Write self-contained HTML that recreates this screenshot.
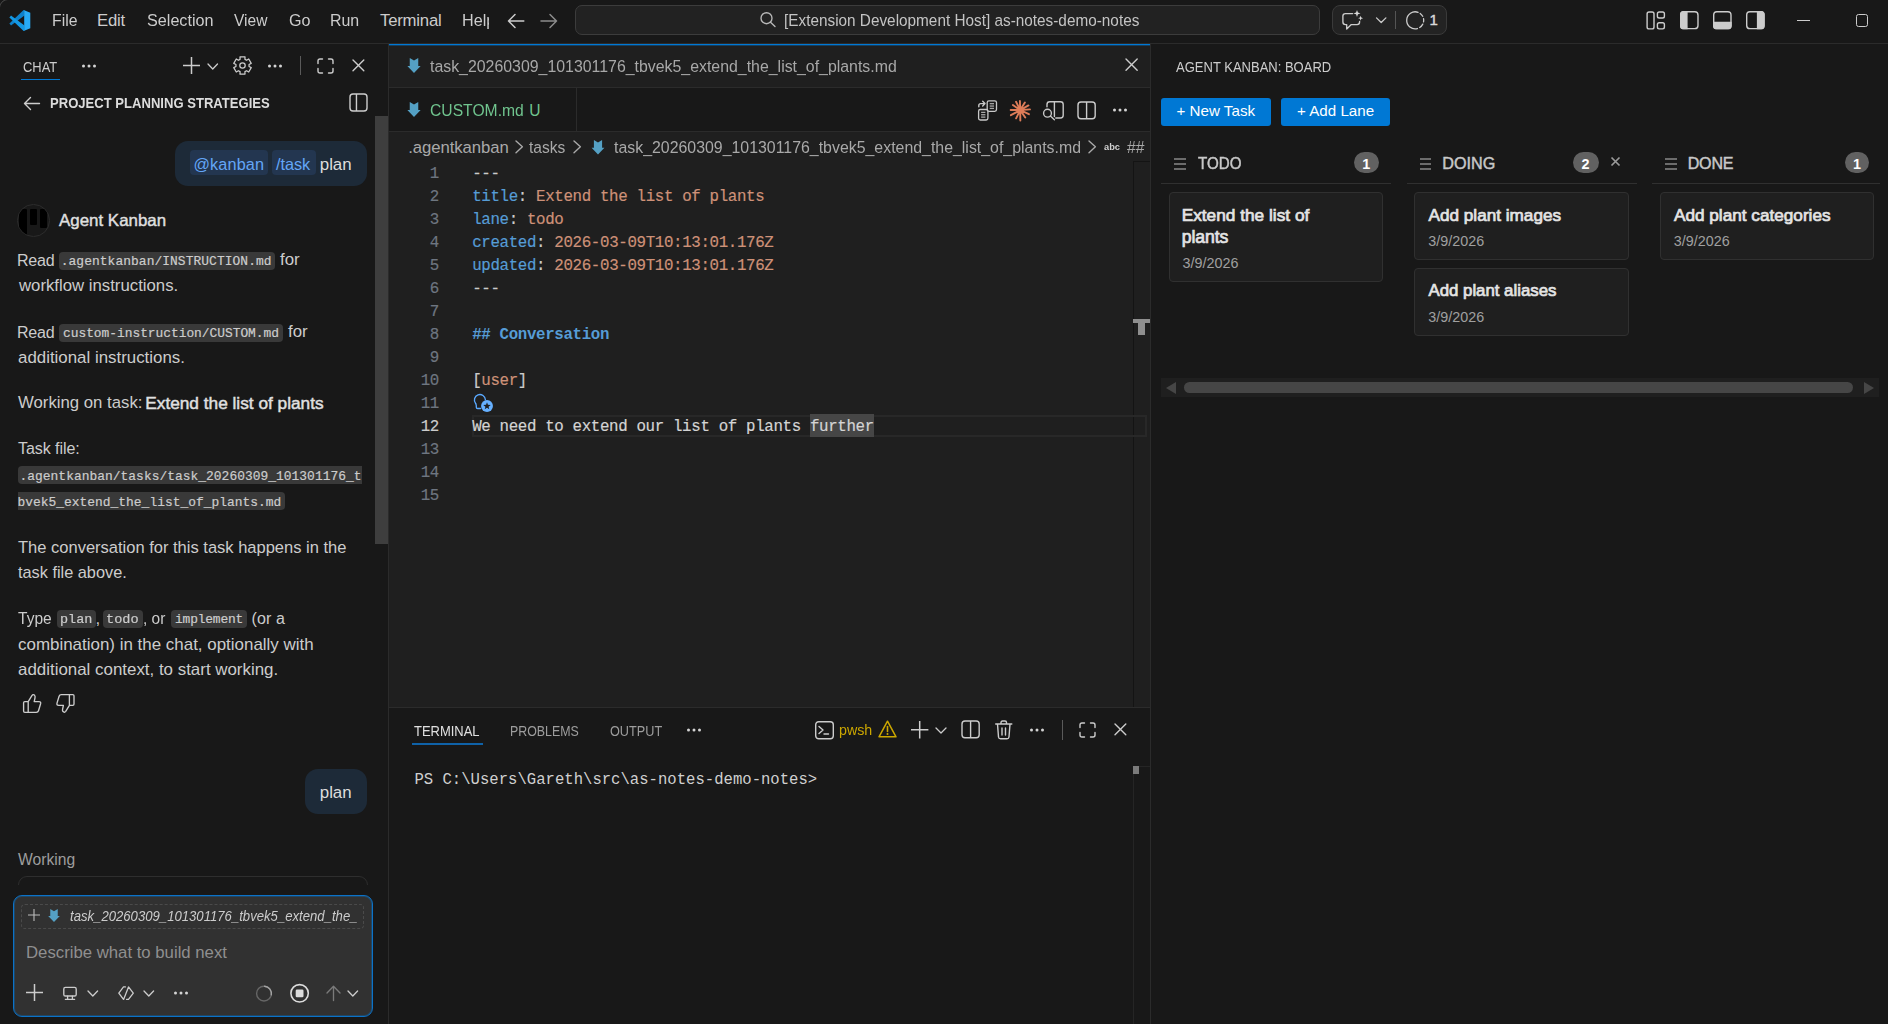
<!DOCTYPE html>
<html lang="en"><head><meta charset="utf-8"><title>[Extension Development Host] as-notes-demo-notes</title>
<style>
html,body{margin:0;padding:0;}
body{width:1888px;height:1024px;overflow:hidden;background:#181818;position:relative;font-family:"Liberation Sans",sans-serif;}
.a{position:absolute;box-sizing:border-box;}
.t{position:absolute;white-space:pre;margin:0;padding:0;line-height:20px;transform-origin:0 50%;font-family:"Liberation Sans",sans-serif;}
.m{font-family:"Liberation Mono",monospace;-webkit-text-stroke:0.2px currentColor;}
.ln{line-height:23px;height:23px;white-space:pre;font-family:"Liberation Mono",monospace;-webkit-text-stroke:0.18px currentColor;}
svg{position:absolute;overflow:visible;}
.s{fill:none;stroke:#cccccc;stroke-width:1;stroke-linecap:round;stroke-linejoin:round;}
</style></head><body>
<div class="a" style="left:0px;top:43px;width:1888px;height:1px;background:#2b2b2b;"></div>
<div class="a" style="left:388px;top:44px;width:1px;height:980px;background:#2b2b2b;"></div>
<div class="a" style="left:389px;top:44px;width:761px;height:663px;background:#1f1f1f;"></div>
<div class="a" style="left:389px;top:44px;width:761px;height:1px;background:#0078d4;"></div>
<div class="a" style="left:389px;top:45px;width:761px;height:1px;background:rgba(0,120,212,0.35);"></div>
<div class="a" style="left:389px;top:87px;width:761px;height:1px;background:#2b2b2b;"></div>
<div class="a" style="left:389px;top:88px;width:761px;height:43px;background:#181818;"></div>
<div class="a" style="left:576px;top:88px;width:1px;height:43px;background:#2b2b2b;"></div>
<div class="a" style="left:389px;top:131px;width:761px;height:1px;background:#2b2b2b;"></div>
<div class="a" style="left:389px;top:707px;width:761px;height:1px;background:#2b2b2b;"></div>
<div class="a" style="left:1150px;top:44px;width:1px;height:980px;background:#2b2b2b;"></div>
<svg style="left:8px;top:9px" width="24" height="23" viewBox="8 9 24 23"><path d="M11 25.600L24.500 15.400V10.400L23.600 10L9.400 23.500Z" fill="#0e82cc"/><path d="M11 15.400L24.500 25.600V30.600L23.600 31L9.400 17.500Z" fill="#1398e4"/><path d="M23.600 10L30.300 12.700V28.300L23.600 31L24.200 30.200V10.800Z" fill="#28abf6"/></svg>
<span class="t" style="left:51.80px;top:11.30px;font-size:16.73px;color:#cccccc;transform:scaleX(0.9457);">File</span>
<span class="t" style="left:97.00px;top:11.30px;font-size:16.73px;color:#cccccc;letter-spacing:-0.221px;">Edit</span>
<span class="t" style="left:146.50px;top:11.30px;font-size:16.73px;color:#cccccc;transform:scaleX(0.9675);">Selection</span>
<span class="t" style="left:233.75px;top:11.30px;font-size:16.73px;color:#cccccc;transform:scaleX(0.9292);">View</span>
<span class="t" style="left:288.75px;top:11.30px;font-size:16.73px;color:#cccccc;transform:scaleX(0.9657);">Go</span>
<span class="t" style="left:330.05px;top:11.30px;font-size:16.73px;color:#cccccc;transform:scaleX(0.9533);">Run</span>
<span class="t" style="left:380.00px;top:11.30px;font-size:16.73px;color:#cccccc;letter-spacing:-0.209px;">Terminal</span>
<div class="a" style="left:460px;top:8px;width:28.6px;height:28px;overflow:hidden">
<span class="t" style="left:1.53px;top:2.80px;font-size:16.73px;color:#cccccc;transform:scaleX(0.9672);">Help</span>
</div>
<svg style="left:507.5px;top:13.899999999999999px" width="15.799999999999955" height="14" viewBox="0 0 15.799999999999955 14"><path d="M15.799999999999955 7H0.5M7 0.5L0.5 7L7 13.5" style="fill:none;stroke:#cccccc;stroke-width:1.5;stroke-linecap:round;stroke-linejoin:round"/></svg>
<svg style="left:541px;top:13.899999999999999px" width="16" height="14" viewBox="0 0 16 14"><path d="M0 7H15.5M9 0.5L15.5 7L9 13.5" style="fill:none;stroke:#8c8c8c;stroke-width:1.5;stroke-linecap:round;stroke-linejoin:round"/></svg>
<div class="a" style="left:575px;top:5px;width:745px;height:30px;background:#222222;border:1px solid #3c3c3c;border-radius:7px;"></div>
<svg style="left:758px;top:10px" width="20" height="20" viewBox="758 10 20 20"><circle cx="766.500" cy="18.200" r="5.500" style="fill:none;stroke:#b8b8b8;stroke-width:1.35;stroke-linecap:round;stroke-linejoin:round;"/><path d="M770.500 22.200L775 26.600" style="fill:none;stroke:#b8b8b8;stroke-width:1.35;stroke-linecap:round;stroke-linejoin:round;"/></svg>
<span class="t" style="left:783.84px;top:10.60px;font-size:15.94px;color:#c4c4c4;transform:scaleX(0.9619);">[Extension Development Host] as-notes-demo-notes</span>
<div class="a" style="left:1332px;top:5px;width:115.3px;height:30px;background:#232323;border:1px solid #3a3a3a;border-radius:8px;"></div>
<svg style="left:1340px;top:9px" width="25" height="23" viewBox="1340 9 25 23"><path d="M1352.600 13.600H1345.400Q1342.900 13.600 1342.900 16.100V22.100Q1342.900 24.600 1345.400 24.600H1346.700V29L1351.300 24.600H1357.100Q1359.600 24.600 1359.600 22.100V21.400" style="fill:none;stroke:#cccccc;stroke-width:1.35;stroke-linecap:round;stroke-linejoin:round;"/><path d="M1357.00 9.90L1357.94 12.46L1360.50 13.40L1357.94 14.34L1357.00 16.90L1356.06 14.34L1353.50 13.40L1356.06 12.46Z" fill="#d8d8d8"/><path d="M1360.60 15.70L1361.27 17.53L1363.10 18.20L1361.27 18.87L1360.60 20.70L1359.93 18.87L1358.10 18.20L1359.93 17.53Z" fill="#d8d8d8"/></svg>
<svg style="left:1374px;top:15px" width="15" height="11" viewBox="1374 15 15 11"><path d="M1376.500 17.900L1381.200 22.500L1385.900 17.900" style="fill:none;stroke:#cccccc;stroke-width:1.3;stroke-linecap:round;stroke-linejoin:round;"/></svg>
<div class="a" style="left:1395px;top:11px;width:1px;height:17.6px;background:#555555;"></div>
<svg style="left:1404px;top:9px" width="23" height="23" viewBox="1404 9 23 23"><path d="M1417.40 28.51A8.5 8.5 0 1 1 1418.11 12.31" style="fill:none;stroke:#cccccc;stroke-width:1.3;stroke-linecap:round;stroke-linejoin:round;"/><path d="M1420.20 13.42A8.5 8.5 0 0 1 1422.71 16.31" style="fill:none;stroke:#cccccc;stroke-width:1.3;stroke-linecap:round;stroke-linejoin:round;"/><path d="M1423.54 18.68A8.5 8.5 0 0 1 1423.54 21.92" style="fill:none;stroke:#cccccc;stroke-width:1.3;stroke-linecap:round;stroke-linejoin:round;"/><path d="M1422.77 24.16A8.5 8.5 0 0 1 1419.70 27.51" style="fill:none;stroke:#cccccc;stroke-width:1.3;stroke-linecap:round;stroke-linejoin:round;"/></svg>
<span class="t" style="left:1429.60px;top:10.30px;font-size:15.0px;color:#d8d8d8;-webkit-text-stroke:0.45px currentColor;">1</span>
<svg style="left:1645px;top:10px" width="22" height="21" viewBox="1645 10 22 21"><rect x="1647.100" y="12" width="6.900" height="16.900" rx="1.900" style="fill:none;stroke:#cccccc;stroke-width:1.4;stroke-linecap:round;stroke-linejoin:round;"/><rect x="1657.400" y="12" width="7" height="6" rx="1.800" style="fill:none;stroke:#cccccc;stroke-width:1.4;stroke-linecap:round;stroke-linejoin:round;"/><rect x="1657.400" y="22.700" width="7" height="6.200" rx="1.800" style="fill:none;stroke:#cccccc;stroke-width:1.4;stroke-linecap:round;stroke-linejoin:round;"/></svg>
<svg style="left:1678.8px;top:10.3px" width="20.700000000000045" height="20.3" viewBox="1678.8 10.3 20.700000000000045 20.3"><path d="M1683.3999999999999 11.3H1687.4V29.6H1683.3999999999999Q1679.8 29.6 1679.8 26.0V14.9Q1679.8 11.3 1683.3999999999999 11.3Z" fill="#cccccc"/><rect x="1680.5" y="12.0" width="17.3" height="16.900000000000002" rx="3.200" style="fill:none;stroke:#cccccc;stroke-width:1.4;stroke-linecap:round;stroke-linejoin:round;"/></svg>
<svg style="left:1711.8px;top:10.3px" width="20.700000000000045" height="20.3" viewBox="1711.8 10.3 20.700000000000045 20.3"><path d="M1712.8 22H1731.5V26.0Q1731.5 29.6 1727.9 29.6H1716.3999999999999Q1712.8 29.6 1712.8 26.0Z" fill="#cccccc"/><rect x="1713.5" y="12.0" width="17.3" height="16.900000000000002" rx="3.200" style="fill:none;stroke:#cccccc;stroke-width:1.4;stroke-linecap:round;stroke-linejoin:round;"/></svg>
<svg style="left:1744.9px;top:10.3px" width="20.700000000000045" height="20.3" viewBox="1744.9 10.3 20.700000000000045 20.3"><path d="M1761.0000000000002 11.3H1756.8V29.6H1761.0000000000002Q1764.6000000000001 29.6 1764.6000000000001 26.0V14.9Q1764.6000000000001 11.3 1761.0000000000002 11.3Z" fill="#cccccc"/><rect x="1746.6000000000001" y="12.0" width="17.3" height="16.900000000000002" rx="3.200" style="fill:none;stroke:#cccccc;stroke-width:1.4;stroke-linecap:round;stroke-linejoin:round;"/></svg>
<div class="a" style="left:1797px;top:19.7px;width:12.8px;height:1.4px;background:#cccccc;"></div>
<div class="a" style="left:1855.6px;top:14.4px;width:12.7px;height:13px;border:1.4px solid #cccccc;border-radius:2.5px;"></div>
<div class="a" style="left:-1px;top:-1px;width:14px;height:14px;border-top-left-radius:9px;border-top:1px solid #4a4a4a;border-left:1px solid #4a4a4a;-webkit-mask-image:linear-gradient(135deg,#000 30%,transparent 55%)"></div>
<span class="t" style="left:23.00px;top:56.80px;font-size:14.55px;color:#cccccc;transform:scaleX(0.8878);">CHAT</span>
<div class="a" style="left:20.5px;top:79px;width:39px;height:1.3px;background:#0078d4;"></div>
<svg style="left:81px;top:64px" width="16" height="4" viewBox="0 0 16 4"><circle cx="2.5" cy="2" r="1.5" fill="#d4d4d4"/><circle cx="8.0" cy="2" r="1.5" fill="#d4d4d4"/><circle cx="13.5" cy="2" r="1.5" fill="#d4d4d4"/></svg>
<svg style="left:183.0px;top:57.0px" width="17.0" height="17.0" viewBox="0 0 17.0 17.0"><path d="M0 8.5H17.0M8.5 0V17.0" style="fill:none;stroke:#cccccc;stroke-width:1.5"/></svg>
<svg style="left:207.75px;top:63.5px" width="9.5" height="5" viewBox="0 0 9.5 5"><path d="M0 0L4.75 5L9.5 0" style="fill:none;stroke:#cccccc;stroke-width:1.3;stroke-linecap:round;stroke-linejoin:round"/></svg>
<svg style="left:231.7px;top:55.3px" width="21.0" height="21.0" viewBox="231.7 55.3 21.0 21.0"><path d="M239.77 59.66L239.69 57.16L244.71 57.16L244.63 59.66L246.30 60.63L248.43 59.30L250.94 63.65L248.73 64.84L248.73 66.76L250.94 67.95L248.43 72.30L246.30 70.97L244.63 71.94L244.71 74.44L239.69 74.44L239.77 71.94L238.10 70.97L235.97 72.30L233.46 67.95L235.67 66.76L235.67 64.84L233.46 63.65L235.97 59.30L238.10 60.63Z" style="fill:none;stroke:#cccccc;stroke-width:1.25;stroke-linecap:round;stroke-linejoin:round;"/><circle cx="242.2" cy="65.8" r="2.7" style="fill:none;stroke:#cccccc;stroke-width:1.25;stroke-linecap:round;stroke-linejoin:round;"/></svg>
<svg style="left:267px;top:64px" width="16" height="4" viewBox="0 0 16 4"><circle cx="2.5" cy="2" r="1.5" fill="#d4d4d4"/><circle cx="8.0" cy="2" r="1.5" fill="#d4d4d4"/><circle cx="13.5" cy="2" r="1.5" fill="#d4d4d4"/></svg>
<div class="a" style="left:300px;top:56px;width:1px;height:19px;background:#5a5a5a;"></div>
<svg style="left:317.6px;top:58.7px" width="15" height="14" viewBox="0 0 15 14"><path d="M0 4.5V2Q0 0 2 0H4.5M10.5 0H13Q15 0 15 2V4.5M15 9.5V12Q15 14 13 14H10.5M4.5 14H2Q0 14 0 12V9.5" style="fill:none;stroke:#cccccc;stroke-width:1.4;stroke-linecap:round"/></svg>
<svg style="left:353.1px;top:60.300000000000004px" width="10.8" height="10.8" viewBox="0 0 10.8 10.8"><path d="M0 0L10.8 10.8M10.8 0L0 10.8" style="fill:none;stroke:#cccccc;stroke-width:1.4;stroke-linecap:round"/></svg>
<svg style="left:24px;top:96.5px" width="15.5" height="13.0" viewBox="0 0 15.5 13.0"><path d="M15.5 6.5H0.5M6.5 0.5L0.5 6.5L6.5 12.5" style="fill:none;stroke:#cccccc;stroke-width:1.4;stroke-linecap:round;stroke-linejoin:round"/></svg>
<span class="t" style="left:50.00px;top:93.00px;font-size:14.55px;color:#dcdcdc;font-weight:700;transform:scaleX(0.8982);">PROJECT PLANNING STRATEGIES</span>
<svg style="left:349.5px;top:93.8px" width="17" height="17" viewBox="0 0 17 17"><rect x="0" y="0" width="17" height="17" rx="3" style="fill:none;stroke:#cccccc;stroke-width:1.4"/><path d="M6.46 0V17" style="stroke:#cccccc;stroke-width:1.4"/></svg>
<div class="a" style="left:375px;top:116px;width:13px;height:428px;background:#3e3e3e;"></div>
<div class="a" style="left:175px;top:141px;width:192px;height:44.5px;background:#1d2a38;border-radius:13px;"></div>
<div class="a" style="left:190px;top:150px;width:77.5px;height:24.5px;background:#233650;border-radius:4px;"></div>
<div class="a" style="left:272px;top:150px;width:43.5px;height:24.5px;background:#233650;border-radius:4px;"></div>
<span class="t" style="left:193.50px;top:154.00px;font-size:16.26px;color:#63a6f7;letter-spacing:0.122px;">@kanban</span>
<span class="t" style="left:276.00px;top:154.00px;font-size:16.31px;color:#63a6f7;letter-spacing:-0.067px;">/task</span>
<span class="t" style="left:319.75px;top:154.50px;font-size:16.86px;color:#dddddd;">plan</span>
<div class="a" style="left:17px;top:204.3px;width:32.6px;height:32.6px;border-radius:50%;overflow:hidden;border:1px solid #2c2c2c"><div class="a" style="left:1.1px;top:3.7px;width:7.5px;height:26px;background:#000;border-radius:1px"></div><div class="a" style="left:11.5px;top:3.7px;width:7.7px;height:15.6px;background:#000;border-radius:1px"></div><div class="a" style="left:21.5px;top:3.7px;width:7.5px;height:19.3px;background:#000;border-radius:1px"></div></div>
<span class="t" style="left:59.00px;top:210.80px;font-size:16.91px;color:#dfdfdf;letter-spacing:-0.001px;-webkit-text-stroke:0.45px currentColor;">Agent Kanban</span>
<span class="t" style="left:17.00px;top:249.50px;font-size:16.05px;color:#cccccc;letter-spacing:-0.220px;">Read</span>
<div class="a" style="left:59px;top:251.5px;width:216px;height:18.5px;background:#393939;border-radius:4px;"></div>
<span class="t m" style="left:60.75px;top:251.80px;font-size:12.9px;color:#cccccc;letter-spacing:0.072px;">.agentkanban/INSTRUCTION.md</span>
<span class="t" style="left:280.00px;top:250.00px;font-size:16.83px;color:#cccccc;letter-spacing:-0.017px;">for</span>
<span class="t" style="left:19.00px;top:276.00px;font-size:16.76px;color:#cccccc;">workflow instructions.</span>
<span class="t" style="left:17.00px;top:321.50px;font-size:16.05px;color:#cccccc;letter-spacing:-0.220px;">Read</span>
<div class="a" style="left:59px;top:323.5px;width:223.5px;height:18.5px;background:#393939;border-radius:4px;"></div>
<span class="t m" style="left:63.00px;top:323.80px;font-size:12.9px;color:#cccccc;letter-spacing:-0.023px;">custom-instruction/CUSTOM.md</span>
<span class="t" style="left:288.00px;top:322.00px;font-size:16.83px;color:#cccccc;letter-spacing:-0.017px;">for</span>
<span class="t" style="left:18.00px;top:348.00px;font-size:16.88px;color:#cccccc;letter-spacing:0.005px;">additional instructions.</span>
<span class="t" style="left:18.00px;top:393.20px;font-size:16.76px;color:#cccccc;letter-spacing:-0.002px;">Working on task:</span>
<span class="t" style="left:145.25px;top:392.70px;font-size:17.25px;color:#e0e0e0;-webkit-text-stroke:0.45px currentColor;">Extend the list of plants</span>
<span class="t" style="left:18.00px;top:437.70px;font-size:16.05px;color:#cccccc;letter-spacing:-0.073px;">Task file:</span>
<div class="a" style="left:18px;top:466px;width:343.5px;height:18px;background:#393939;border-radius:4px 0 0 4px;"></div>
<span class="t m" style="left:19.50px;top:466.50px;font-size:12.9px;color:#cccccc;letter-spacing:0.038px;">.agentkanban/tasks/task_20260309_101301176_t</span>
<div class="a" style="left:18px;top:492px;width:266.5px;height:18.4px;background:#393939;border-radius:0 4px 4px 0;"></div>
<span class="t m" style="left:17.50px;top:493.00px;font-size:12.9px;color:#cccccc;letter-spacing:0.022px;">bvek5_extend_the_list_of_plants.md</span>
<span class="t" style="left:18.00px;top:537.70px;font-size:16.52px;color:#cccccc;letter-spacing:-0.005px;">The conversation for this task happens in the</span>
<span class="t" style="left:18.00px;top:562.00px;font-size:16.34px;color:#cccccc;letter-spacing:-0.009px;">task file above.</span>
<span class="t" style="left:18.00px;top:608.30px;font-size:16.05px;color:#cccccc;transform:scaleX(0.9687);">Type</span>
<div class="a" style="left:57px;top:609.6px;width:38.5px;height:18.199999999999932px;background:#393939;border-radius:4px;"></div>
<span class="t m" style="left:59.71px;top:610.00px;font-size:12.9px;color:#cccccc;transform:scaleX(1.0443);">plan</span>
<span class="t" style="left:95.50px;top:608.80px;font-size:16.9px;color:#cccccc;">,</span>
<div class="a" style="left:103.25px;top:609.6px;width:39.25px;height:18.199999999999932px;background:#393939;border-radius:4px;"></div>
<span class="t m" style="left:106.45px;top:610.00px;font-size:12.9px;color:#cccccc;transform:scaleX(1.0528);">todo</span>
<span class="t" style="left:142.54px;top:608.30px;font-size:16.05px;color:#cccccc;transform:scaleX(0.9639);">, or</span>
<div class="a" style="left:170.5px;top:609.6px;width:76.5px;height:18.199999999999932px;background:#393939;border-radius:4px;"></div>
<span class="t m" style="left:175.00px;top:610.00px;font-size:12.9px;color:#cccccc;letter-spacing:-0.173px;">implement</span>
<span class="t" style="left:251.50px;top:608.30px;font-size:16.05px;color:#cccccc;letter-spacing:0.113px;">(or a</span>
<span class="t" style="left:18.00px;top:634.50px;font-size:16.95px;color:#cccccc;letter-spacing:0.001px;">combination) in the chat, optionally with</span>
<span class="t" style="left:18.00px;top:659.50px;font-size:16.91px;color:#cccccc;letter-spacing:-0.003px;">additional context, to start working.</span>
<svg style="left:21px;top:692px" width="23" height="23" viewBox="21 692 23 23"><path d="M24.800 701.600H28.200L31.900 695.600Q33.200 693.900 34.600 695.300Q35.400 696.300 35 697.800L34.200 701.600H38.900Q41.200 701.600 40.600 703.800L38.500 710.700Q38 712.300 36.300 712.300H24.800Q23.600 712.300 23.600 711.100V702.800Q23.600 701.600 24.800 701.600ZM28.200 701.600V712.300" style="fill:none;stroke:#cccccc;stroke-width:1.35;stroke-linecap:round;stroke-linejoin:round;"/></svg>
<svg style="left:54px;top:692px" width="23" height="23" viewBox="54 692 23 23"><g transform="translate(33.400 0) rotate(180 32.100 703.450)"><path d="M24.800 701.600H28.200L31.900 695.600Q33.200 693.900 34.600 695.300Q35.400 696.300 35 697.800L34.200 701.600H38.900Q41.200 701.600 40.600 703.800L38.500 710.700Q38 712.300 36.300 712.300H24.800Q23.600 712.300 23.600 711.100V702.800Q23.600 701.600 24.800 701.600ZM28.200 701.600V712.300" style="fill:none;stroke:#cccccc;stroke-width:1.35;stroke-linecap:round;stroke-linejoin:round;"/></g></svg>
<div class="a" style="left:304.5px;top:769px;width:62.5px;height:45px;background:#1d2a38;border-radius:13px;"></div>
<span class="t" style="left:319.75px;top:782.50px;font-size:16.86px;color:#dddddd;">plan</span>
<span class="t" style="left:18.00px;top:849.50px;font-size:15.67px;color:#9d9d9d;letter-spacing:0.012px;">Working</span>
<div class="a" style="left:18px;top:876px;width:349.5px;height:9px;overflow:hidden"><div class="a" style="left:0;top:0;width:349.5px;height:30px;border:1px solid #2e2e2e;border-radius:9px 9px 0 0"></div></div>
<div class="a" style="left:13px;top:895px;width:360px;height:121.5px;background:#313131;border:1px solid #0b72c8;border-radius:9px;box-shadow:inset 0 0 0 1px rgba(0,120,212,0.3);"></div>
<div class="a" style="left:21px;top:904px;width:343px;height:25px;border:1px dashed #4a4a4a;border-radius:4px;"></div>
<svg style="left:28.299999999999997px;top:909px" width="12" height="12" viewBox="0 0 12 12"><path d="M0 6H12M6 0V12" style="fill:none;stroke:#bbbbbb;stroke-width:1.1"/></svg>
<svg style="left:46.35px;top:908.3px" width="16.0" height="17.0" viewBox="46.35 908.3 16.0 17.0"><path d="M50.61 909.30L54.35 911.59L58.09 909.30L58.09 916.34L60.20 916.34L54.35 922.41L48.50 916.34L50.61 916.34Z" fill="#54a0c4"/></svg>
<span class="t" style="left:69.50px;top:906.40px;font-size:14.45px;color:#cccccc;font-style:italic;transform:scaleX(0.9098);">task_20260309_101301176_tbvek5_extend_the_</span>
<span class="t" style="left:26.00px;top:942.50px;font-size:16.76px;color:#8f8f8f;letter-spacing:-0.006px;">Describe what to build next</span>
<svg style="left:26.1px;top:984.1px" width="17.0" height="17.0" viewBox="0 0 17.0 17.0"><path d="M0 8.5H17.0M8.5 0V17.0" style="fill:none;stroke:#cccccc;stroke-width:1.5"/></svg>
<svg style="left:61px;top:984px" width="18" height="18" viewBox="61 984 18 18"><rect x="63.800" y="987.300" width="12.400" height="8.700" rx="1.600" style="fill:none;stroke:#cccccc;stroke-width:1.35;stroke-linecap:round;stroke-linejoin:round;"/><path d="M67.600 996.200V999.200M72.400 996.200V999.200M65.400 999.400H74.600" style="fill:none;stroke:#cccccc;stroke-width:1.3;stroke-linecap:round;stroke-linejoin:round;"/></svg>
<svg style="left:88.2px;top:990.7px" width="9.6" height="5" viewBox="0 0 9.6 5"><path d="M0 0L4.8 5L9.6 0" style="fill:none;stroke:#cccccc;stroke-width:1.3;stroke-linecap:round;stroke-linejoin:round"/></svg>
<svg style="left:116px;top:984px" width="20" height="18" viewBox="116 984 20 18"><path d="M125.400 986.900H123.500L118.800 993.100L123.500 999.400M126.600 999.400H128.500L133.300 993.100L128.500 986.900L123.600 999.400" style="fill:none;stroke:#cccccc;stroke-width:1.3;stroke-linecap:round;stroke-linejoin:round;"/></svg>
<svg style="left:144.1px;top:990.7px" width="9.6" height="5" viewBox="0 0 9.6 5"><path d="M0 0L4.8 5L9.6 0" style="fill:none;stroke:#cccccc;stroke-width:1.3;stroke-linecap:round;stroke-linejoin:round"/></svg>
<svg style="left:173px;top:991.3px" width="16" height="4" viewBox="0 0 16 4"><circle cx="2.5" cy="2" r="1.5" fill="#d4d4d4"/><circle cx="8.0" cy="2" r="1.5" fill="#d4d4d4"/><circle cx="13.5" cy="2" r="1.5" fill="#d4d4d4"/></svg>
<svg style="left:254px;top:983px" width="20" height="21" viewBox="254 983 20 21"><circle cx="264" cy="993.600" r="7.400" style="fill:none;stroke:#666666;stroke-width:1.4;stroke-linecap:round;stroke-linejoin:round;"/><path d="M264.64 986.23A7.4 7.4 0 0 1 271.29 994.88" style="fill:none;stroke:#a4a4a4;stroke-width:1.4;stroke-linecap:round;stroke-linejoin:round;"/></svg>
<svg style="left:289px;top:982px" width="22" height="22" viewBox="289 982 22 22"><circle cx="299.600" cy="993.300" r="8.700" style="fill:none;stroke:#dcdcdc;stroke-width:1.6;stroke-linecap:round;stroke-linejoin:round;"/><rect x="295.700" y="989.400" width="7.800" height="7.800" rx="1.300" fill="#dcdcdc"/></svg>
<svg style="left:325px;top:984px" width="18" height="19" viewBox="325 984 18 19"><path d="M333.500 1000.500V986.600M327 993L333.500 986.300L340 993" style="fill:none;stroke:#7a7a7a;stroke-width:1.35;stroke-linecap:round;stroke-linejoin:round;"/></svg>
<svg style="left:348.4px;top:990.6px" width="9.6" height="5" viewBox="0 0 9.6 5"><path d="M0 0L4.8 5L9.6 0" style="fill:none;stroke:#cccccc;stroke-width:1.3;stroke-linecap:round;stroke-linejoin:round"/></svg>
<svg style="left:405.7px;top:56.9px" width="16.0" height="17.000000000000007" viewBox="405.7 56.9 16.0 17.000000000000007"><path d="M409.45 57.90L413.70 60.50L417.95 57.90L417.95 65.90L420.35 65.90L413.70 72.80L407.05 65.90L409.45 65.90Z" fill="#54a0c4"/></svg>
<span class="t" style="left:430.00px;top:56.50px;font-size:16.73px;color:#a8a8a8;transform:scaleX(0.9498);">task_20260309_101301176_tbvek5_extend_the_list_of_plants.md</span>
<svg style="left:1125.7px;top:59.4px" width="11.2" height="11.2" viewBox="0 0 11.2 11.2"><path d="M0 0L11.2 11.2M11.2 0L0 11.2" style="fill:none;stroke:#cccccc;stroke-width:1.4;stroke-linecap:round"/></svg>
<svg style="left:405.7px;top:100.9px" width="16.0" height="17.0" viewBox="405.7 100.9 16.0 17.0"><path d="M409.45 101.90L413.70 104.50L417.95 101.90L417.95 109.90L420.35 109.90L413.70 116.80L407.05 109.90L409.45 109.90Z" fill="#54a0c4"/></svg>
<span class="t" style="left:430.00px;top:100.50px;font-size:16.73px;color:#70c48e;transform:scaleX(0.9377);">CUSTOM.md</span>
<span class="t" style="left:529.30px;top:100.50px;font-size:15.6px;color:#70c48e;">U</span>
<svg style="left:976px;top:98px" width="23" height="24" viewBox="976 98 23 24"><rect x="987.2" y="100.8" width="9.3" height="10.5" rx="1.700" style="fill:none;stroke:#c8c8c8;stroke-width:1.3;stroke-linecap:round;stroke-linejoin:round;" /><path d="M989.7 103.70H994.0" style="fill:none;stroke:#a8a8a8;stroke-width:1.3;stroke-linecap:round;stroke-linejoin:round;stroke-linecap:butt"/><path d="M989.7 106.05H994.0" style="fill:none;stroke:#a8a8a8;stroke-width:1.3;stroke-linecap:round;stroke-linejoin:round;stroke-linecap:butt"/><path d="M989.7 108.40H994.0" style="fill:none;stroke:#a8a8a8;stroke-width:1.3;stroke-linecap:round;stroke-linejoin:round;stroke-linecap:butt"/><rect x="978.6" y="109.5" width="9.3" height="10.5" rx="1.700" style="fill:none;stroke:#c8c8c8;stroke-width:1.3;stroke-linecap:round;stroke-linejoin:round;" /><path d="M981.1 112.40H985.4" style="fill:none;stroke:#a8a8a8;stroke-width:1.3;stroke-linecap:round;stroke-linejoin:round;stroke-linecap:butt"/><path d="M981.1 114.75H985.4" style="fill:none;stroke:#a8a8a8;stroke-width:1.3;stroke-linecap:round;stroke-linejoin:round;stroke-linecap:butt"/><path d="M981.1 117.10H985.4" style="fill:none;stroke:#a8a8a8;stroke-width:1.3;stroke-linecap:round;stroke-linejoin:round;stroke-linecap:butt"/><path d="M978.800 106.800V105.500Q978.800 103.600 980.700 103.600H984.600M982.700 101.300L985 103.600L982.700 105.900" style="fill:none;stroke:#c8c8c8;stroke-width:1.4;stroke-linecap:round;stroke-linejoin:round;"/></svg>
<svg style="left:1008px;top:98px" width="25" height="25" viewBox="1008 98 25 25"><path d="M1020.200 110.100L1019.92 101.02M1020.200 110.100L1024.87 102.48M1020.200 110.100L1028.45 105.40M1020.200 110.100L1029.94 109.35M1020.200 110.100L1028.90 114.22M1020.200 110.100L1025.26 117.51M1020.200 110.100L1020.34 120.47M1020.200 110.100L1016.12 118.37M1020.200 110.100L1010.90 115.19M1020.200 110.100L1010.65 109.97M1020.200 110.100L1012.90 105.03M1020.200 110.100L1016.04 101.73" style="fill:none;stroke:#de7c58;stroke-width:1.900;stroke-linecap:round"/><circle cx="1020.200" cy="110.100" r="3" fill="#de7c58"/></svg>
<svg style="left:1040px;top:98px" width="27" height="25" viewBox="1040 98 27 25"><path d="M1047 106.800V104.400Q1047 101.700 1049.700 101.700H1060.500Q1063.200 101.700 1063.200 104.400V115.300Q1063.200 118 1060.500 118H1055.800M1054.400 101.700V116.500" style="fill:none;stroke:#c8c8c8;stroke-width:1.4;stroke-linecap:round;stroke-linejoin:round;"/><circle cx="1047.500" cy="113.200" r="3.900" style="fill:none;stroke:#c8c8c8;stroke-width:1.4;stroke-linecap:round;stroke-linejoin:round;"/><path d="M1050.400 116L1054.400 119.800" style="fill:none;stroke:#c8c8c8;stroke-width:1.4;stroke-linecap:round;stroke-linejoin:round;"/></svg>
<svg style="left:1078.1000000000001px;top:101.69999999999999px" width="17.2" height="16.8" viewBox="0 0 17.2 16.8"><rect x="0" y="0" width="17.2" height="16.8" rx="3" style="fill:none;stroke:#cccccc;stroke-width:1.4"/><path d="M8.6 0V16.8" style="stroke:#cccccc;stroke-width:1.4"/></svg>
<svg style="left:1111.8px;top:108px" width="16" height="4" viewBox="0 0 16 4"><circle cx="2.5" cy="2" r="1.5" fill="#d4d4d4"/><circle cx="8.0" cy="2" r="1.5" fill="#d4d4d4"/><circle cx="13.5" cy="2" r="1.5" fill="#d4d4d4"/></svg>
<span class="t" style="left:408.25px;top:138.00px;font-size:16.73px;color:#a9a9a9;letter-spacing:-0.071px;">.agentkanban</span>
<svg style="left:516.4px;top:140.85px" width="6.4" height="11.7" viewBox="0 0 6.4 11.7"><path d="M0 0L6.4 5.85L0 11.7" style="fill:none;stroke:#a9a9a9;stroke-width:1.4;stroke-linecap:round;stroke-linejoin:round"/></svg>
<span class="t" style="left:529.25px;top:138.00px;font-size:16.73px;color:#a9a9a9;transform:scaleX(0.9299);">tasks</span>
<svg style="left:573.5px;top:140.85px" width="6.4" height="11.7" viewBox="0 0 6.4 11.7"><path d="M0 0L6.4 5.85L0 11.7" style="fill:none;stroke:#a9a9a9;stroke-width:1.4;stroke-linecap:round;stroke-linejoin:round"/></svg>
<svg style="left:590.1px;top:139.1px" width="16.0" height="17.0" viewBox="590.1 139.1 16.0 17.0"><path d="M594.00 140.10L598.10 142.61L602.20 140.10L602.20 147.82L604.52 147.82L598.10 154.48L591.68 147.82L594.00 147.82Z" fill="#54a0c4"/></svg>
<span class="t" style="left:614.25px;top:138.00px;font-size:16.73px;color:#a9a9a9;transform:scaleX(0.9504);">task_20260309_101301176_tbvek5_extend_the_list_of_plants.md</span>
<svg style="left:1089.3px;top:140.85px" width="6.4" height="11.7" viewBox="0 0 6.4 11.7"><path d="M0 0L6.4 5.85L0 11.7" style="fill:none;stroke:#a9a9a9;stroke-width:1.4;stroke-linecap:round;stroke-linejoin:round"/></svg>
<span class="t" style="left:1103.50px;top:137.30px;font-size:9.74px;color:#d0d0d0;font-weight:700;transform:scaleX(0.9505);">abc</span>
<span class="t" style="left:1127.00px;top:138.00px;font-size:16.73px;color:#a9a9a9;transform:scaleX(0.9327);">##</span>
<div class="a" style="left:1133px;top:162px;width:1px;height:545px;background:#141414;"></div>
<div class="a" style="left:1133px;top:161px;width:17px;height:1px;background:#141414;"></div>
<div class="a" style="left:1133px;top:319px;width:17px;height:4px;background:#8f8f8f;"></div>
<div class="a" style="left:1138px;top:323px;width:7px;height:11.5px;background:#8f8f8f;"></div>
<div class="a" style="left:472px;top:415px;width:675px;height:22px;border:2px solid #282828;"></div>
<div class="a" style="left:809.81px;top:414px;width:63.910000000000004px;height:23px;background:#464646;"></div>
<div class="a ln" style="left:389px;top:163px;width:50px;text-align:right;font-size:15.8px;letter-spacing:-0.352px;color:#6e7681">1</div>
<div class="a ln" style="left:472.2px;top:163px;font-size:15.8px;letter-spacing:-0.352px"><span style="color:#cccccc">---</span></div>
<div class="a ln" style="left:389px;top:186px;width:50px;text-align:right;font-size:15.8px;letter-spacing:-0.352px;color:#6e7681">2</div>
<div class="a ln" style="left:472.2px;top:186px;font-size:15.8px;letter-spacing:-0.352px"><span style="color:#569cd6">title</span><span style="color:#cccccc">: </span><span style="color:#ce9178">Extend the list of plants</span></div>
<div class="a ln" style="left:389px;top:209px;width:50px;text-align:right;font-size:15.8px;letter-spacing:-0.352px;color:#6e7681">3</div>
<div class="a ln" style="left:472.2px;top:209px;font-size:15.8px;letter-spacing:-0.352px"><span style="color:#569cd6">lane</span><span style="color:#cccccc">: </span><span style="color:#ce9178">todo</span></div>
<div class="a ln" style="left:389px;top:232px;width:50px;text-align:right;font-size:15.8px;letter-spacing:-0.352px;color:#6e7681">4</div>
<div class="a ln" style="left:472.2px;top:232px;font-size:15.8px;letter-spacing:-0.352px"><span style="color:#569cd6">created</span><span style="color:#cccccc">: </span><span style="color:#ce9178">2026-03-09T10:13:01.176Z</span></div>
<div class="a ln" style="left:389px;top:255px;width:50px;text-align:right;font-size:15.8px;letter-spacing:-0.352px;color:#6e7681">5</div>
<div class="a ln" style="left:472.2px;top:255px;font-size:15.8px;letter-spacing:-0.352px"><span style="color:#569cd6">updated</span><span style="color:#cccccc">: </span><span style="color:#ce9178">2026-03-09T10:13:01.176Z</span></div>
<div class="a ln" style="left:389px;top:278px;width:50px;text-align:right;font-size:15.8px;letter-spacing:-0.352px;color:#6e7681">6</div>
<div class="a ln" style="left:472.2px;top:278px;font-size:15.8px;letter-spacing:-0.352px"><span style="color:#cccccc">---</span></div>
<div class="a ln" style="left:389px;top:301px;width:50px;text-align:right;font-size:15.8px;letter-spacing:-0.352px;color:#6e7681">7</div>
<div class="a ln" style="left:389px;top:324px;width:50px;text-align:right;font-size:15.8px;letter-spacing:-0.352px;color:#6e7681">8</div>
<div class="a ln" style="left:472.2px;top:324px;font-size:15.8px;letter-spacing:-0.352px"><span style="color:#569cd6;font-weight:700;-webkit-text-stroke:0">## Conversation</span></div>
<div class="a ln" style="left:389px;top:347px;width:50px;text-align:right;font-size:15.8px;letter-spacing:-0.352px;color:#6e7681">9</div>
<div class="a ln" style="left:389px;top:370px;width:50px;text-align:right;font-size:15.8px;letter-spacing:-0.352px;color:#6e7681">10</div>
<div class="a ln" style="left:472.2px;top:370px;font-size:15.8px;letter-spacing:-0.352px"><span style="color:#cccccc">[</span><span style="color:#ce9178">user</span><span style="color:#cccccc">]</span></div>
<div class="a ln" style="left:389px;top:393px;width:50px;text-align:right;font-size:15.8px;letter-spacing:-0.352px;color:#6e7681">11</div>
<div class="a ln" style="left:389px;top:416px;width:50px;text-align:right;font-size:15.8px;letter-spacing:-0.352px;color:#cccccc">12</div>
<div class="a ln" style="left:472.2px;top:416px;font-size:15.8px;letter-spacing:-0.352px"><span style="color:#d4d4d4">We need to extend our list of plants further</span></div>
<div class="a ln" style="left:389px;top:439px;width:50px;text-align:right;font-size:15.8px;letter-spacing:-0.352px;color:#6e7681">13</div>
<div class="a ln" style="left:389px;top:462px;width:50px;text-align:right;font-size:15.8px;letter-spacing:-0.352px;color:#6e7681">14</div>
<div class="a ln" style="left:389px;top:485px;width:50px;text-align:right;font-size:15.8px;letter-spacing:-0.352px;color:#6e7681">15</div>
<svg style="left:472px;top:392px" width="23" height="22" viewBox="472 392 23 22"><path d="M475.57 403.39A5.5 5.5 0 1 1 485.40 399.81" style="fill:none;stroke:#5aa9ff;stroke-width:1.35;stroke-linecap:round;stroke-linejoin:round;"/><path d="M475.600 403.400Q476.300 404.700 476.300 405.700V407.200Q476.300 408.500 477.600 408.500H480.600" style="fill:none;stroke:#5aa9ff;stroke-width:1.35;stroke-linecap:round;stroke-linejoin:round;"/><circle cx="487" cy="406" r="5.950" fill="#66b0ff"/><path d="M487.00 402.30L487.96 404.87L490.71 404.99L488.56 406.71L489.29 409.36L487.00 407.84L484.71 409.36L485.44 406.71L483.29 404.99L486.04 404.87Z" fill="#1f1f1f"/></svg>
<span class="t" style="left:414.25px;top:721.20px;font-size:14.55px;color:#e0e0e0;transform:scaleX(0.8916);">TERMINAL</span>
<div class="a" style="left:412px;top:743px;width:70.5px;height:2px;background:#0f62a8;"></div>
<span class="t" style="left:509.65px;top:721.20px;font-size:14.55px;color:#9d9d9d;transform:scaleX(0.8517);">PROBLEMS</span>
<span class="t" style="left:610.00px;top:721.20px;font-size:14.55px;color:#9d9d9d;transform:scaleX(0.8721);">OUTPUT</span>
<svg style="left:686.3px;top:728px" width="16" height="4" viewBox="0 0 16 4"><circle cx="2.5" cy="2" r="1.5" fill="#d4d4d4"/><circle cx="8.0" cy="2" r="1.5" fill="#d4d4d4"/><circle cx="13.5" cy="2" r="1.5" fill="#d4d4d4"/></svg>
<svg style="left:815px;top:720.5px" width="19" height="18.5" viewBox="0 0 19 18.500"><rect x="0.7" y="0.7" width="17.600" height="17.100" rx="3" class="s" style="stroke-width:1.4"/><path d="M4 5.500L8 9L4 12.500M9 13H13.500" class="s" style="stroke-width:1.4"/></svg>
<span class="t" style="left:839.28px;top:720.00px;font-size:15.44px;color:#cca700;transform:scaleX(0.9230);">pwsh</span>
<svg style="left:878px;top:720px" width="19" height="18" viewBox="0 0 19 18"><path d="M9.500 1.200L18 16.800H1Z" style="fill:none;stroke:#cca700;stroke-width:1.5;stroke-linejoin:round"/><path d="M9.500 6.500V11.500" style="stroke:#cca700;stroke-width:1.6;stroke-linecap:round"/><circle cx="9.500" cy="14" r="1" fill="#cca700"/></svg>
<svg style="left:911.3px;top:721.0px" width="17.4" height="17.4" viewBox="0 0 17.4 17.4"><path d="M0 8.7H17.4M8.7 0V17.4" style="fill:none;stroke:#cccccc;stroke-width:1.5"/></svg>
<svg style="left:936.0px;top:727.5px" width="10" height="5" viewBox="0 0 10 5"><path d="M0 0L5.0 5L10 0" style="fill:none;stroke:#cccccc;stroke-width:1.3;stroke-linecap:round;stroke-linejoin:round"/></svg>
<svg style="left:961.6999999999999px;top:721.3000000000001px" width="17.2" height="16.8" viewBox="0 0 17.2 16.8"><rect x="0" y="0" width="17.2" height="16.8" rx="3" style="fill:none;stroke:#cccccc;stroke-width:1.4"/><path d="M8.6 0V16.8" style="stroke:#cccccc;stroke-width:1.4"/></svg>
<svg style="left:995px;top:720px" width="17.5" height="19.5" viewBox="0 0 17.500 19.500"><path d="M0.7 4H16.800M6 4V2.500Q6 1 7.500 1H10Q11.500 1 11.500 2.500V4M2.500 4L3.500 17Q3.700 18.800 5.500 18.800H12Q13.800 18.800 14 17L15 4M7 8V15M10.500 8V15" class="s" style="stroke-width:1.4"/></svg>
<svg style="left:1029px;top:728px" width="16" height="4" viewBox="0 0 16 4"><circle cx="2.5" cy="2" r="1.5" fill="#d4d4d4"/><circle cx="8.0" cy="2" r="1.5" fill="#d4d4d4"/><circle cx="13.5" cy="2" r="1.5" fill="#d4d4d4"/></svg>
<div class="a" style="left:1062px;top:720px;width:1px;height:19.5px;background:#5a5a5a;"></div>
<svg style="left:1079.5px;top:722.7px" width="15" height="14" viewBox="0 0 15 14"><path d="M0 4.5V2Q0 0 2 0H4.5M10.5 0H13Q15 0 15 2V4.5M15 9.5V12Q15 14 13 14H10.5M4.5 14H2Q0 14 0 12V9.5" style="fill:none;stroke:#cccccc;stroke-width:1.4;stroke-linecap:round"/></svg>
<svg style="left:1114.6px;top:724.3000000000001px" width="10.8" height="10.8" viewBox="0 0 10.8 10.8"><path d="M0 0L10.8 10.8M10.8 0L0 10.8" style="fill:none;stroke:#cccccc;stroke-width:1.4;stroke-linecap:round"/></svg>
<div class="a ln" style="left:414.4px;top:769px;-webkit-text-stroke:0;font-size:15.6px;letter-spacing:0.010px;color:#d0d0d0">PS C:\Users\Gareth\src\as-notes-demo-notes&gt;</div>
<div class="a" style="left:1133px;top:766px;width:1px;height:258px;background:#252525;"></div>
<div class="a" style="left:1133px;top:766px;width:17px;height:1px;background:#252525;"></div>
<div class="a" style="left:1133px;top:766px;width:5.5px;height:7.5px;background:#7a7a7a;"></div>
<span class="t" style="left:1176.00px;top:56.80px;font-size:14.55px;color:#cccccc;transform:scaleX(0.8945);">AGENT KANBAN: BOARD</span>
<div class="a" style="left:1161px;top:98px;width:110px;height:28px;background:#0078d4;border-radius:3px;"></div>
<span class="t" style="left:1176.50px;top:101.30px;font-size:15.15px;color:#ffffff;letter-spacing:0.016px;">+ New Task</span>
<div class="a" style="left:1281px;top:98px;width:109px;height:28px;background:#0078d4;border-radius:3px;"></div>
<span class="t" style="left:1297.00px;top:101.30px;font-size:15.13px;color:#ffffff;letter-spacing:0.013px;">+ Add Lane</span>
<div class="a" style="left:1174.4px;top:158.2px;width:11.3px;height:2px;background:#6c6c6c;"></div>
<div class="a" style="left:1174.4px;top:163px;width:11.3px;height:2px;background:#6c6c6c;"></div>
<div class="a" style="left:1174.4px;top:167.6px;width:11.3px;height:2px;background:#6c6c6c;"></div>
<span class="t" style="left:1197.75px;top:152.90px;font-size:16.04px;color:#c8c8c8;transform:scaleX(0.9440);-webkit-text-stroke:0.45px currentColor;">TODO</span>
<div class="a" style="left:1354px;top:151.7px;width:24.5px;height:21.3px;background:#616161;border-radius:11px;"></div>
<span class="t" style="left:1362.25px;top:153.80px;font-size:14.4px;color:#ffffff;font-weight:700;">1</span>
<div class="a" style="left:1161px;top:183px;width:230px;height:1px;background:#303030;"></div>
<div class="a" style="left:1168.5px;top:192px;width:214.5px;height:90px;background:#1f1f1f;border:1px solid #303030;border-radius:4px;"></div>
<span class="t" style="left:1181.70px;top:204.70px;font-size:17.26px;color:#e4e4e4;letter-spacing:0.004px;-webkit-text-stroke:0.7px currentColor;">Extend the list of</span>
<span class="t" style="left:1181.70px;top:226.70px;font-size:17.64px;color:#e4e4e4;letter-spacing:-0.084px;-webkit-text-stroke:0.7px currentColor;">plants</span>
<span class="t" style="left:1182.50px;top:252.70px;font-size:14.33px;color:#a0a0a0;letter-spacing:0.028px;">3/9/2026</span>
<div class="a" style="left:1419.9px;top:158.2px;width:11.3px;height:2px;background:#6c6c6c;"></div>
<div class="a" style="left:1419.9px;top:163px;width:11.3px;height:2px;background:#6c6c6c;"></div>
<div class="a" style="left:1419.9px;top:167.6px;width:11.3px;height:2px;background:#6c6c6c;"></div>
<span class="t" style="left:1442.25px;top:152.90px;font-size:16.21px;color:#c8c8c8;letter-spacing:0.008px;-webkit-text-stroke:0.45px currentColor;">DOING</span>
<div class="a" style="left:1572.75px;top:151.7px;width:26.25px;height:21.3px;background:#616161;border-radius:11px;"></div>
<span class="t" style="left:1581.38px;top:153.80px;font-size:14.4px;color:#ffffff;font-weight:700;">2</span>
<div class="a" style="left:1406.5px;top:183px;width:230px;height:1px;background:#303030;"></div>
<svg style="left:1611px;top:157px" width="9" height="9" viewBox="0 0 9 9"><path d="M0.500 0.500L8.500 8.500M8.500 0.500L0.500 8.500" style="stroke:#9a9a9a;stroke-width:1.7"/></svg>
<div class="a" style="left:1414.3px;top:192px;width:214.5px;height:68px;background:#1f1f1f;border:1px solid #303030;border-radius:4px;"></div>
<span class="t" style="left:1428.50px;top:204.70px;font-size:17.15px;color:#e4e4e4;letter-spacing:0.008px;-webkit-text-stroke:0.7px currentColor;">Add plant images</span>
<span class="t" style="left:1428.30px;top:230.70px;font-size:14.33px;color:#a0a0a0;letter-spacing:0.028px;">3/9/2026</span>
<div class="a" style="left:1414.3px;top:268px;width:214.5px;height:68px;background:#1f1f1f;border:1px solid #303030;border-radius:4px;"></div>
<span class="t" style="left:1428.50px;top:281.20px;font-size:16.81px;color:#e4e4e4;letter-spacing:-0.002px;-webkit-text-stroke:0.7px currentColor;">Add plant aliases</span>
<span class="t" style="left:1428.30px;top:306.70px;font-size:14.33px;color:#a0a0a0;letter-spacing:0.028px;">3/9/2026</span>
<div class="a" style="left:1665.4px;top:158.2px;width:11.3px;height:2px;background:#6c6c6c;"></div>
<div class="a" style="left:1665.4px;top:163px;width:11.3px;height:2px;background:#6c6c6c;"></div>
<div class="a" style="left:1665.4px;top:167.6px;width:11.3px;height:2px;background:#6c6c6c;"></div>
<span class="t" style="left:1687.75px;top:152.90px;font-size:16.04px;color:#c8c8c8;letter-spacing:-0.208px;-webkit-text-stroke:0.45px currentColor;">DONE</span>
<div class="a" style="left:1845.25px;top:151.7px;width:23.75px;height:21.3px;background:#616161;border-radius:11px;"></div>
<span class="t" style="left:1853.12px;top:153.80px;font-size:14.4px;color:#ffffff;font-weight:700;">1</span>
<div class="a" style="left:1652px;top:183px;width:228px;height:1px;background:#303030;"></div>
<div class="a" style="left:1659.75px;top:192px;width:214.5px;height:68px;background:#1f1f1f;border:1px solid #303030;border-radius:4px;"></div>
<span class="t" style="left:1673.95px;top:204.70px;font-size:17.18px;color:#e4e4e4;letter-spacing:0.004px;-webkit-text-stroke:0.7px currentColor;">Add plant categories</span>
<span class="t" style="left:1673.75px;top:230.70px;font-size:14.33px;color:#a0a0a0;letter-spacing:0.028px;">3/9/2026</span>
<div class="a" style="left:1161px;top:378px;width:718px;height:19px;background:#1f1f1f;"></div>
<div class="a" style="left:1184px;top:382px;width:669px;height:11px;background:#464646;border-radius:6px;"></div>
<svg style="left:1165.5px;top:382px" width="10" height="12" viewBox="0 0 10 12"><path d="M10 0V12L0 6Z" fill="#464646"/></svg>
<svg style="left:1864px;top:382px" width="10" height="12" viewBox="0 0 10 12"><path d="M0 0V12L10 6Z" fill="#464646"/></svg>
</body></html>
